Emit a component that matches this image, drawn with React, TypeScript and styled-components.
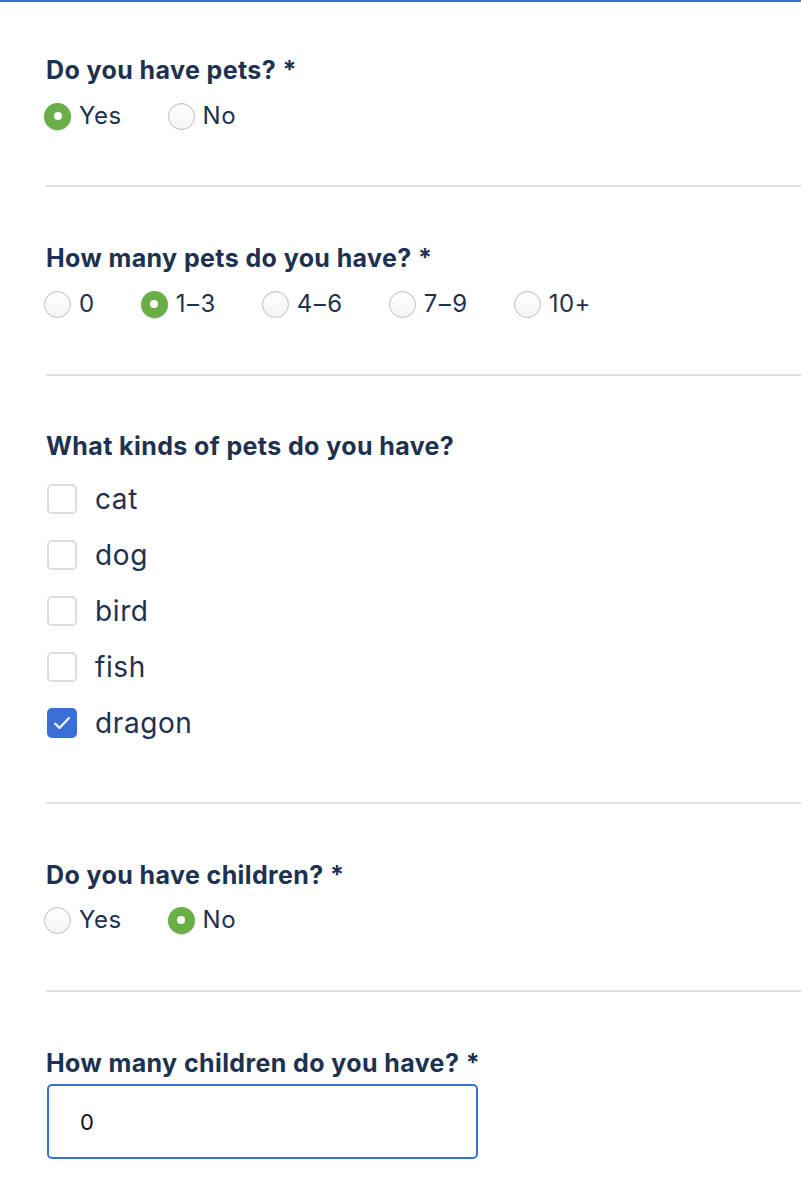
import React, { useState } from "react";
import styled, { createGlobalStyle } from "styled-components";

const GlobalStyle = createGlobalStyle`
  html, body {
    margin: 0;
    padding: 0;
    background: #ffffff;
  }
  body {
    font-family: "Inter", "Noto Sans", sans-serif;
    color: #1d3150;
  }
`;

const Page = styled.div`
  width: 801px;
  min-height: 1202px;
  border-top: 2px solid #3a6fd8;
  box-sizing: border-box;
  overflow: hidden;
`;

const Section = styled.div<{ top: number; bottom: number; last?: boolean }>`
  margin-left: 46px;
  padding: ${(p) => p.top}px 0 ${(p) => p.bottom}px;
  border-bottom: ${(p) => (p.last ? "none" : "2px solid #e0dfe4")};
`;

const Title = styled.div<{ gap: number }>`
  font-size: 25px;
  font-weight: 700;
  line-height: 28px;
  letter-spacing: 0.4px;
  margin-bottom: ${(p) => p.gap}px;
  white-space: nowrap;
`;

const RadioRow = styled.div`
  display: flex;
  align-items: center;
  margin-left: -2px;
`;

const RadioItem = styled.label`
  display: flex;
  align-items: center;
  gap: 8px;
  margin-right: 46px;
  font-size: 24px;
  line-height: 28px;
  letter-spacing: 0.5px;
  cursor: pointer;
`;

const Dash = styled.span`
  margin: 0 1px;
`;

const RadioCircle = styled.span<{ checked: boolean }>`
  position: relative;
  width: 27px;
  height: 27px;
  border-radius: 50%;
  box-sizing: border-box;
  background: ${(p) => (p.checked ? "#6aae48" : "linear-gradient(#ffffff, #f4f4f4)")};
  border: ${(p) => (p.checked ? "none" : "1.5px solid #bdbdbd")};
  box-shadow: ${(p) => (p.checked ? "0 1px 1px rgba(0,0,0,0.15)" : "inset 0 1px 1px rgba(0,0,0,0.05)")};
  &::after {
    content: "";
    display: ${(p) => (p.checked ? "block" : "none")};
    position: absolute;
    left: 50%;
    top: 50%;
    width: 8px;
    height: 8px;
    margin: -4px 0 0 -4px;
    border-radius: 50%;
    background: #ffffff;
  }
`;

const CheckList = styled.div`
  display: flex;
  flex-direction: column;
  margin-left: 1px;
`;

const CheckItem = styled.label`
  display: flex;
  align-items: center;
  height: 56px;
  gap: 18px;
  font-size: 28px;
  letter-spacing: 0.6px;
  cursor: pointer;
`;

const CheckBox = styled.span<{ checked: boolean }>`
  display: flex;
  align-items: center;
  justify-content: center;
  width: 30px;
  height: 30px;
  box-sizing: border-box;
  border-radius: 5px;
  background: ${(p) => (p.checked ? "#3a6fd8" : "#ffffff")};
  border: ${(p) => (p.checked ? "none" : "2px solid #dcdce2")};
`;

const NumberInput = styled.input`
  display: block;
  width: 431px;
  height: 75px;
  margin-left: 1px;
  box-sizing: border-box;
  border: 2px solid #3a6fd8;
  border-radius: 5px;
  padding: 0 0 0 31px;
  font-family: "Inter", "Noto Sans", sans-serif;
  font-size: 22px;
  color: #111111;
  outline: none;
`;

type RadioGroupProps = {
  options: string[];
  value: string;
  onChange: (v: string) => void;
};

// en dashes in the range labels sit a bit wider in the original font
const renderLabel = (label: string) => {
  const parts = label.split("–");
  if (parts.length === 1) return label;
  return (
    <>
      {parts[0]}
      <Dash>–</Dash>
      {parts[1]}
    </>
  );
};

const RadioGroup = ({ options, value, onChange }: RadioGroupProps) => (
  <RadioRow>
    {options.map((o) => (
      <RadioItem key={o} onClick={() => onChange(o)}>
        <RadioCircle checked={value === o} />
        <span>{renderLabel(o)}</span>
      </RadioItem>
    ))}
  </RadioRow>
);

const App = () => {
  const [hasPets, setHasPets] = useState("Yes");
  const [petCount, setPetCount] = useState("1–3");
  const [kinds, setKinds] = useState<string[]>(["dragon"]);
  const [hasKids, setHasKids] = useState("No");
  const [kidCount, setKidCount] = useState("0");

  const toggleKind = (k: string) => {
    setKinds(kinds.includes(k) ? kinds.filter((x) => x !== k) : [...kinds, k]);
  };

  return (
    <Page>
      <GlobalStyle />
      <Section top={54} bottom={55}>
        <Title gap={18}>Do you have pets? *</Title>
        <RadioGroup options={["Yes", "No"]} value={hasPets} onChange={setHasPets} />
      </Section>

      <Section top={57} bottom={56}>
        <Title gap={18}>How many pets do you have? *</Title>
        <RadioGroup
          options={["0", "1–3", "4–6", "7–9", "10+"]}
          value={petCount}
          onChange={setPetCount}
        />
      </Section>

      <Section top={56} bottom={51}>
        <Title gap={11}>What kinds of pets do you have?</Title>
        <CheckList>
          {["cat", "dog", "bird", "fish", "dragon"].map((k) => {
            const checked = kinds.includes(k);
            return (
              <CheckItem key={k} onClick={() => toggleKind(k)}>
                <CheckBox checked={checked}>
                  {checked && (
                    <svg width="18" height="14" viewBox="0 0 18 14">
                      <path
                        d="M2 7.5l4.5 4.5L16 2"
                        fill="none"
                        stroke="#ffffff"
                        strokeWidth="2"
                        strokeLinecap="round"
                        strokeLinejoin="round"
                      />
                    </svg>
                  )}
                </CheckBox>
                {k}
              </CheckItem>
            );
          })}
        </CheckList>
      </Section>

      <Section top={57} bottom={56}>
        <Title gap={17}>Do you have children? *</Title>
        <RadioGroup options={["Yes", "No"]} value={hasKids} onChange={setHasKids} />
      </Section>

      <Section top={57} bottom={40} last>
        <Title gap={7}>How many children do you have? *</Title>
        <NumberInput value={kidCount} onChange={(e) => setKidCount(e.target.value)} />
      </Section>
    </Page>
  );
};

export default App;
